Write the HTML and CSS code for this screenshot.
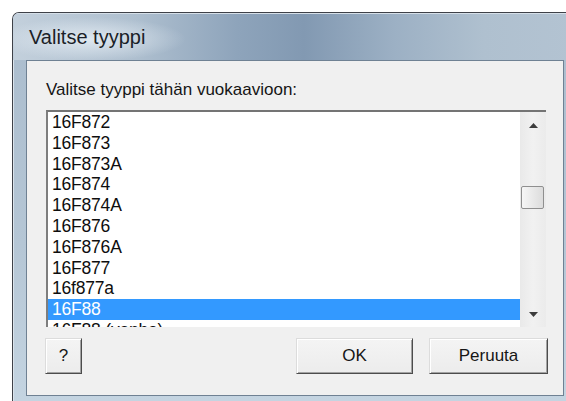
FILE: index.html
```html
<!DOCTYPE html>
<html lang="fi">
<head>
<meta charset="utf-8">
<title>Valitse tyyppi</title>
<link rel="stylesheet" href="styles.css">
</head>
<body>
<div class="window">
  <div class="titlebar"><span class="title">Valitse tyyppi</span></div>
  <div class="frame">
    <div class="client">
      <div class="prompt">Valitse tyyppi tähän vuokaavioon:</div>
      <div class="listbox">
        <ul class="items">
          <li>16F872</li>
          <li>16F873</li>
          <li>16F873A</li>
          <li>16F874</li>
          <li>16F874A</li>
          <li>16F876</li>
          <li>16F876A</li>
          <li>16F877</li>
          <li>16f877a</li>
          <li class="selected">16F88</li>
          <li>16F88 (vanha)</li>
        </ul>
        <div class="scrollbar">
          <div class="arrow">
            <svg width="9" height="5" viewBox="0 0 9 5"><path d="M0 5 L4.5 0 L9 5 Z" fill="#3c3c3c"/></svg>
          </div>
          <div class="track"><div class="thumb"></div></div>
          <div class="arrow">
            <svg width="9" height="5" viewBox="0 0 9 5"><path d="M0 0 L9 0 L4.5 5 Z" fill="#3c3c3c"/></svg>
          </div>
        </div>
      </div>
      <div class="buttons">
        <button class="btn help">?</button>
        <span class="spacer"></span>
        <button class="btn ok">OK</button>
        <button class="btn cancel">Peruuta</button>
      </div>
    </div>
  </div>
</div>
</body>
</html>
```

FILE: styles.css
```css
html, body {
  margin: 0;
  padding: 0;
}

body {
  width: 566px;
  height: 401px;
  overflow: hidden;
  background: #ffffff;
  font-family: "Liberation Sans", Arial, sans-serif;
  color: #111111;
}

/* Aero-style dialog window */
.window {
  margin: 12px 0 0 12px;
  width: 562px;
  height: 389px;
  box-sizing: border-box;
  border: 1px solid #3e4148;
  border-bottom: none;
  border-radius: 7px 7px 0 0;
  background: linear-gradient(to bottom, #aabccd 0%, #b5c6d5 60%, #c4d4e1 100%);
  box-shadow: inset 1px 1px 0 #dbe4ec;
  display: flex;
  flex-direction: column;
  overflow: hidden;
}

.titlebar {
  height: 47px;
  flex: none;
  display: flex;
  align-items: center;
  padding: 2px 0 0 16px;
  box-sizing: border-box;
  background:
    radial-gradient(ellipse 95px 22px at 78px 26px, rgba(230, 238, 245, 0.85), rgba(230, 238, 245, 0) 100%),
    linear-gradient(to right, #c3d0dc 0%, #aebfcf 22%, #8ea4bb 40%, #8299b2 52%, #9cb0c4 68%, #afc0cf 84%, #b3c3d2 100%);
  box-shadow: inset 0 1px 0 #d5dfe8;
}

.title {
  font-family: "Liberation Sans", Arial, sans-serif;
  font-size: 20px;
  color: #1b1f28;
}

.frame {
  flex: 1;
  padding: 0 0 5px 13px;
  display: flex;
}

.client {
  width: 538px;
  height: 336px;
  box-sizing: border-box;
  border: 1px solid #6f8193;
  background: #f0f0f0;
  padding: 19px 0 0 19px;
  display: flex;
  flex-direction: column;
}

.prompt {
  font-size: 17px;
  line-height: 20px;
  height: 20px;
  color: #151515;
}

/* List box with its vertical scroll bar */
.listbox {
  margin-top: 10px;
  width: 500px;
  height: 217px;
  box-sizing: border-box;
  border-top: 2px solid #747474;
  border-left: 2px solid #7e7e7e;
  background: #ffffff;
  display: flex;
}

.items {
  flex: 1;
  list-style: none;
  margin: 0;
  padding: 0;
  overflow: hidden;
}

.items li {
  height: 20.8px;
  line-height: 20.8px;
  padding-left: 4px;
  font-size: 17.5px;
  letter-spacing: -0.2px;
  color: #0e0e0e;
  white-space: nowrap;
}

.items li.selected {
  background: #3399ff;
  color: #ffffff;
}

.scrollbar {
  width: 26px;
  flex: none;
  display: flex;
  flex-direction: column;
  background: linear-gradient(to right, #e9e9e9, #f1f1f1 50%, #ebebeb);
}

.arrow {
  height: 26px;
  flex: none;
  display: flex;
  align-items: center;
  justify-content: center;
}

.track {
  flex: 1;
  padding: 48px 2px 0 1px;
}

.thumb {
  height: 23px;
  box-sizing: border-box;
  border: 1px solid #8f8f8f;
  border-radius: 2px;
  background: linear-gradient(to right, #f6f6f6, #dcdcdc);
}

/* Dialog buttons */
.buttons {
  margin-top: 11px;
  margin-left: -1px;
  width: 503px;
  display: flex;
  gap: 16px;
}

.spacer {
  flex: 1;
}

.btn {
  height: 36px;
  box-sizing: border-box;
  padding: 0;
  font-family: "Liberation Sans", Arial, sans-serif;
  font-size: 17px;
  color: #161616;
  background: linear-gradient(to bottom, #f4f4f4, #ececec);
  border: 1px solid;
  border-color: #dcdcdc #4c4c4c #4c4c4c #dcdcdc;
  box-shadow: inset 1px 1px 0 #ffffff, inset -1px -1px 0 #a3a3a3;
}

.help {
  width: 37px;
}

.ok {
  width: 117px;
}

.cancel {
  width: 119px;
}
```
